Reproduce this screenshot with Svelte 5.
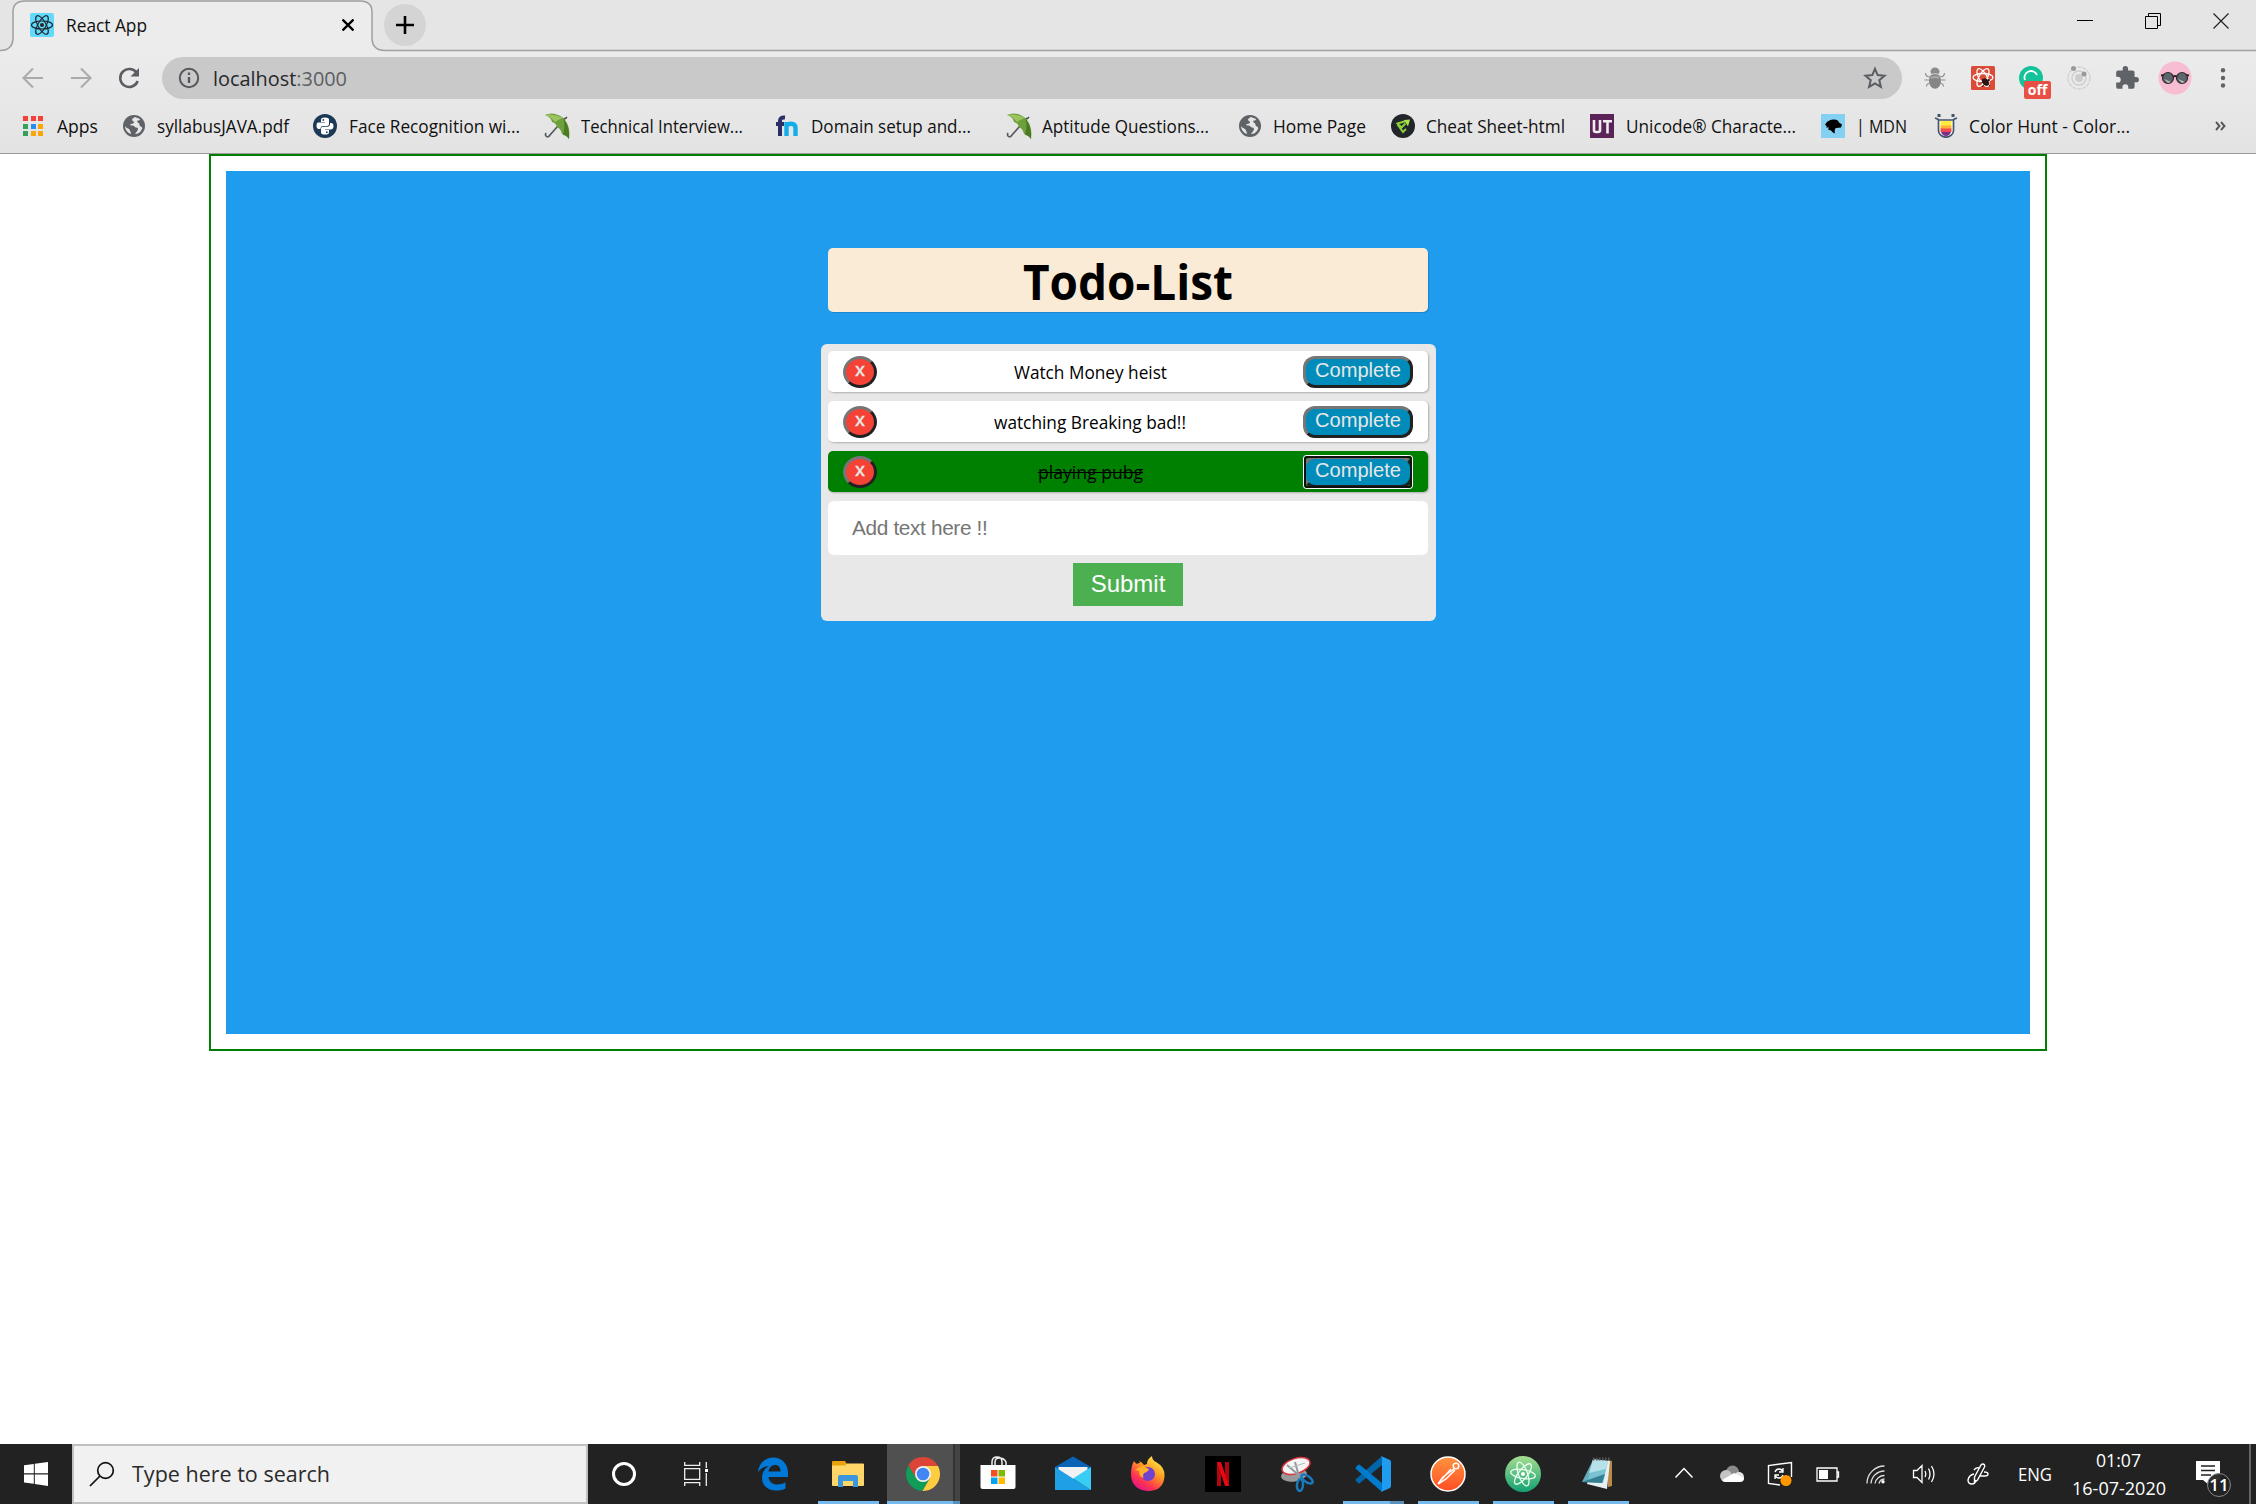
<script>
  const bookmarks = [
    { icon: 'apps', label: 'Apps', slot: 36, text: 41, cell: 101 },
    { icon: 'globe', label: 'syllabusJAVA.pdf', slot: 35, text: 132, cell: 191 },
    { icon: 'python', label: 'Face Recognition wi...', slot: 36, text: 171, cell: 231 },
    { icon: 'umbrella', label: 'Technical Interview...', slot: 37, text: 162, cell: 231 },
    { icon: 'fn', label: 'Domain setup and...', slot: 36, text: 160, cell: 231 },
    { icon: 'umbrella', label: 'Aptitude Questions...', slot: 36, text: 167, cell: 232 },
    { icon: 'globe', label: 'Home Page', slot: 35, text: 93, cell: 153 },
    { icon: 'emerald', label: 'Cheat Sheet-html', slot: 35, text: 139, cell: 199 },
    { icon: 'ut', label: 'Unicode® Characte...', slot: 36, text: 170, cell: 231 },
    { icon: 'mdn', label: '| MDN', slot: 35, text: 51, cell: 113 },
    { icon: 'colorhunt', label: 'Color Hunt - Color...', slot: 35, text: 161, cell: 281 }
  ];

  const extensions = ['bug', 'reactdev', 'grammarly', 'orbit', 'puzzle', 'avatar', 'dots'];

  let todos = $state([
    { text: 'Watch Money heist', width: 153, done: false },
    { text: 'watching Breaking bad!!', width: 192, done: false },
    { text: 'playing pubg', width: 105, done: true }
  ]);

  const pinned = [
    { icon: 'edge' },
    { icon: 'folder', state: 'open wide' },
    { icon: 'chrome', state: 'active' },
    { icon: 'store' },
    { icon: 'mail' },
    { icon: 'firefox' },
    { icon: 'netflix' },
    { icon: 'snip' },
    { icon: 'vscode', state: 'open multi' },
    { icon: 'postman', state: 'open' },
    { icon: 'atom', state: 'open' },
    { icon: 'notepad', state: 'open' }
  ];

  const tray = ['chevron', 'cloud', 'update', 'battery', 'wifi', 'volume'];

  // Condenses a label horizontally so that it fills the given width.
  function fit(node, width) {
    const natural = node.getBoundingClientRect().width;
    node.style.transform = `scaleX(${width / natural})`;
    node.style.marginRight = `${width - natural}px`;
  }
</script>

{#snippet icon(name)}
  {#if name === 'apps'}
    <svg width="24" height="24" viewBox="0 0 24 24">
      <path fill="#f44336" d="M2 2h5v5H2zM10 2h5v5h-5zM17 2h5v5h-5z" />
      <path fill="#34a05a" d="M2 10h5v5H2zM2 17h5v5H2z" />
      <path fill="#2a8cf0" d="M10 10h5v5h-5z" />
      <path fill="#f9a60a" d="M17 10h5v5h-5zM10 17h5v5h-5zM17 17h5v5h-5z" />
    </svg>
  {:else if name === 'globe'}
    <svg width="24" height="24" viewBox="0 0 24 24">
      <circle cx="12" cy="12" r="11" fill="#5f6368" />
      <path fill="#e6e6e6" d="M13 3c-1 1-3 1-3 3 0 1 2 1 2 2s-1 2-3 2l-1 1c1 1 4 0 5 2 1 1 3 0 3 2s-2 3-3 5c3 0 6-2 7-5 1-2-1-2-2-3s0-3-2-3l-1-2c1-1 3 0 3-2zM3 12c1 2 3 2 4 3 1 2 2 3 2 5-3-1-6-4-6-8z" />
    </svg>
  {:else if name === 'python'}
    <svg width="24" height="24" viewBox="0 0 24 24">
      <circle cx="12" cy="12" r="12" fill="#1c3a56" />
      <path fill="#fff" d="M8 8V5.500Q8 3.500 12 3.500t4 2V10q0 2-2 2h-4q-2.500 0-2.500 3H6q-2.500 0-2.500-3.500T6 8.500h6V8z" />
      <path fill="#fff" d="M16 16v2.500q0 2-4 2t-4-2V15q0-2.200 2-2.200h4.500q2.500 0 2.500-3V9h1q2.500 0 2.500 3T18 15.500h-6v.5z" />
      <circle cx="10.300" cy="5.900" r=".9" fill="#1c3a56" /><circle cx="13.800" cy="18.200" r=".9" fill="#1c3a56" />
    </svg>
  {:else if name === 'umbrella'}
    <svg width="26" height="26" viewBox="0 0 26 26">
      <path d="M21 5 6 22Q4 25 2 23Q1 22 2 20" fill="none" stroke="#555b60" stroke-width="1.700" />
      <path fill="#6e9f3d" d="M1 2Q9-2 18 4q9 7 7 22-3-5-7-5-1-5-5-7-1-4-5-5Q7 4 1 2z" />
      <path fill="#9bc45f" d="M1 2q9-2 18 3-4 1-8 4Q7 4 1 2z" /><path fill="#4a7a22" d="M19 5q7 8 6 21-3-4-6-4Q22 12 19 5z" />
      <path d="M21 6l2-2" stroke="#444" stroke-width="1.500" />
    </svg>
  {:else if name === 'fn'}
    <svg width="24" height="24" viewBox="0 0 24 24">
      <path fill="none" stroke="#2a2f66" stroke-width="4" d="M5 22V7q0-4 5-3.500M1 10h8" />
      <path fill="none" stroke="#12aeea" stroke-width="4.400" d="M11.500 22V8M11.500 12q2-3 6-2 3 .5 3 4v8" />
    </svg>
  {:else if name === 'emerald'}
    <svg width="24" height="24" viewBox="0 0 24 24">
      <circle cx="12" cy="12" r="12" fill="#22252a" />
      <path fill="none" stroke="#8ccf3a" stroke-width="2" d="M15 7 6.500 9.500l4 4 4-4M6.500 10.500 12 18l3-3" /><path fill="#a9e34a" d="m13 6 6-.500-2 7z" />
    </svg>
  {:else if name === 'ut'}
    <svg width="24" height="24" viewBox="0 0 24 24">
      <path fill="#5c2358" d="M0 0h24v24H0z" />
      <path fill="none" stroke="#eee" stroke-width="2.600" d="M4 6v10.500Q4 18 6 18h2q2 0 2-1.500V6M13 7.300h9M17.500 7v12.500" />
    </svg>
  {:else if name === 'mdn'}
    <svg width="24" height="24" viewBox="0 0 24 24">
      <path fill="#83d0f2" d="M0 0h24v24H0z" />
      <path d="M4 11q2-5 8-5.500 5-.5 6 3l3 2-1 3-5 .5q-2 1-1 5.500-3-1-4-3l-3-1 1-2-3 0 1-1.500z" />
    </svg>
  {:else if name === 'colorhunt'}
    <svg width="24" height="24" viewBox="0 0 24 24">
      <path fill="#fff" d="M4 6h16v10a8 7 0 0 1-16 0z" />
      <path fill="#ffeb3b" d="M6.500 7h11v5h-11z" /><path fill="#ffb038" d="M6.500 11.500h11V15h-11z" /><path fill="#ee4b50" d="M6.500 14.500h11V18h-11z" /><path fill="#7b2f8c" d="M7 18h10q-1.500 4-5 4t-5-4z" />
      <path fill="none" stroke="#42556b" stroke-width="1.700" d="M1 4q3 1 4 2h14q1-1 4-2M4.500 6v10.500a7.500 6.700 0 0 0 15 0V6" />
      <path stroke="#42556b" stroke-width="3" d="M5 0v3M19 0v3" />
    </svg>
  {:else if name === 'bug'}
    <svg width="24" height="24" viewBox="0 0 24 24">
      <path d="M2.500 7q0 4 5 4M21.500 7q0 4-5 4M1.500 14h21M3.500 20.500q0-3 4-3.500M20.500 20.500q0-3-4-3.500" fill="none" stroke="#909090" stroke-width="1.200" />
      <ellipse cx="12" cy="5.500" rx="4.500" ry="4" fill="#8c8c8c" /><ellipse cx="12" cy="15" rx="6" ry="7.800" fill="#858585" />
      <path d="M6 9.500Q12 6 18 9.500" fill="none" stroke="#d5d5d5" />
      <path d="M8 12q4-2 8 0" fill="none" stroke="#aaa" stroke-width="2" />
    </svg>
  {:else if name === 'reactdev'}
    <svg width="24" height="24" viewBox="0 0 24 24">
      <rect width="24" height="24" rx="1.500" fill="#dc4a38" />
      <g fill="none" stroke="#fff" stroke-width="1.300"><ellipse cx="12" cy="11.500" rx="10" ry="4" /><ellipse cx="12" cy="11.500" rx="10" ry="4" transform="rotate(60 12 11.500)" /><ellipse cx="12" cy="11.500" rx="10" ry="4" transform="rotate(120 12 11.500)" /></g>
      <ellipse cx="14.500" cy="16" rx="3" ry="4" fill="#2a1414" transform="rotate(-35 14.500 16)" />
      <path d="M10 17l9-3M11 21l7-8M11 13l8 7" stroke="#2a1414" />
    </svg>
  {:else if name === 'grammarly'}
    <svg width="34" height="34" viewBox="0 0 34 34">
      <circle cx="17" cy="17" r="12" fill="#15c39a" />
      <path d="M11 19a6.500 6.500 0 0 1 12-5" fill="none" stroke="#fff" stroke-width="1.800" />
    </svg>
  {:else if name === 'orbit'}
    <svg width="26" height="26" viewBox="0 0 26 26">
      <circle cx="13" cy="13" r="11" fill="none" stroke="#d0d0d0" stroke-width="1.300" stroke-dasharray="4 1" /><circle cx="13" cy="13" r="7" fill="none" stroke="#ccc" stroke-width="1.300" /><circle cx="13" cy="13" r="4" fill="#ccc" />
      <circle cx="7.500" cy="3.500" r="2.500" fill="#999" /><circle cx="18" cy="9" r="2.500" fill="#999" />
    </svg>
  {:else if name === 'puzzle'}
    <svg width="26" height="26" viewBox="0 0 24 24">
      <path fill="#5f6368" d="M20.500 11H19V7a2 2 0 0 0-2-2h-4V3.500a2.500 2.500 0 0 0-5 0V5H4a2 2 0 0 0-2 2v3.800h1.500a2.700 2.700 0 0 1 0 5.400H2V20a2 2 0 0 0 2 2h3.800v-1.500a2.700 2.700 0 0 1 5.400 0V22H17a2 2 0 0 0 2-2v-4h1.500a2.500 2.500 0 0 0 0-5z" />
    </svg>
  {:else if name === 'avatar'}
    <svg width="34" height="34" viewBox="0 0 34 34">
      <circle cx="17" cy="17" r="16.500" fill="#f9bdd3" />
      <circle cx="10" cy="17" r="5.500" fill="#5d666a" stroke="#33282c" stroke-width="1.200" /><circle cx="24" cy="17" r="5.500" fill="#5d666a" stroke="#33282c" stroke-width="1.200" />
      <path d="M3 14.500l3-.5M31 14.500l-3-.5M15 16q2-2 4 0" fill="none" stroke="#33282c" stroke-width="1.800" />
      <path d="M6 18l4 4 3-1zM20 18l4 4 3-1z" fill="#b9c0c2" />
    </svg>
  {:else if name === 'dots'}
    <svg width="8" height="24" viewBox="0 0 8 24"><g fill="#5f6368"><circle cx="4" cy="4.300" r="2.200" /><circle cx="4" cy="12" r="2.200" /><circle cx="4" cy="19.500" r="2.200" /></g></svg>
  {:else if name === 'edge'}
    <svg width="36" height="36" viewBox="0 0 36 36">
      <path fill="#0078d7" d="M3 16C4 6 11 1.500 18.500 1.500 27 1.500 33 8 33 17v4H13.500c.5 5 4.500 7.500 9 7.500 3 0 5.500-.8 8-2.200v6.200C28 34 25 34.500 21 34.500 12 34.500 7 29 7 21.500c0-5 3-9.300 7-11.500C9.500 10.500 6 12 3 16zm10.500-.5h12c0-4-1.800-6.500-5.500-6.500s-6 3-6.500 6.500z" />
    </svg>
  {:else if name === 'folder'}
    <svg width="36" height="36" viewBox="0 0 36 36">
      <path fill="#e8a30c" d="M2 6q0-1 1-1h12l2 3v6H2z" /><path fill="#ffd667" d="M2 9.500h13l2-2h16q1 0 1 1V29q0 1-1 1H3q-1 0-1-1z" />
      <path fill="#3b97dc" d="M8 31V21q0-2 2-2h16q2 0 2 2v10h-5v-6H13v6z" />
    </svg>
  {:else if name === 'chrome'}
    <svg width="36" height="36" viewBox="0 0 36 36">
      <path fill="#db4437" d="M3.300 9.500 10.600 22 18 10h14.900A17 17 0 0 0 3.300 9.500z" />
      <path fill="#0f9d58" d="M3.300 9.500A17 17 0 0 0 17.500 35l7.300-13H11z" /><path fill="#ffcd40" d="M33 10H18l7 12-7.500 13A17 17 0 0 0 33 10z" />
      <circle cx="18" cy="18" r="8" fill="#f1f1f1" /><circle cx="18" cy="18" r="6.300" fill="#4285f4" />
    </svg>
  {:else if name === 'store'}
    <svg width="36" height="36" viewBox="0 0 36 36">
      <path d="M12 10V6q0-5 5-5t5 5v4M15 10V6q0-4 4.500-4T26 6v4" fill="none" stroke="#eee" stroke-width="1.500" />
      <path fill="#fff" d="M.5 9h35v22q0 2-2 2h-31q-2 0-2-2z" />
      <path fill="#f25022" d="M11 14h6.500v6.500H11z" /><path fill="#7fba00" d="M18.500 14H25v6.500h-6.500z" /><path fill="#00a4ef" d="M11 21.500h6.500V28H11z" /><path fill="#ffb900" d="M18.500 21.500H25V28h-6.500z" />
    </svg>
  {:else if name === 'mail'}
    <svg width="36" height="36" viewBox="0 0 36 36">
      <path fill="#0b63b5" d="M0 11 18 .5 36 11v5H0z" /><path fill="#f2f2f2" d="M3.500 11h29v12h-29z" /><path fill="#1f9fe5" d="M0 11 36 34H0z" /><path fill="#38cdf5" d="M36 11v23L18 22.500z" />
    </svg>
  {:else if name === 'firefox'}
    <svg width="36" height="36" viewBox="0 0 36 36">
      <defs>
        <linearGradient id="fox" x1=".9" y1=".1" x2=".3" y2="1"><stop offset="0" stop-color="#fff04a" /><stop offset=".4" stop-color="#ff9a22" /><stop offset=".75" stop-color="#ff3550" /><stop offset="1" stop-color="#e31587" /></linearGradient>
      </defs>
      <path fill="url(#fox)" d="M4 5q1 2 3 3 1-1 3-1l-1-2q3 1 5 4l3-1q0-5 5-8 0 4 4 6 9 5 8.500 14Q33.500 35 18 35 2 34 1 19 1 10 4 5z" />
      <circle cx="18" cy="18" r="7" fill="#7142cf" /><path fill="#ffae28" d="M5 14q5-4 9-4 1 2 5 3-1 3-5 4-2 3 0 5-5-1-5-7z" />
    </svg>
  {:else if name === 'netflix'}
    <svg width="36" height="36" viewBox="0 0 36 36">
      <path d="M0 0h36v36H0z" /><path fill="#b1060f" d="M12 6h4v24h-4zM20 6h4v24h-4z" /><path fill="#e50914" d="M12 6h4l8 24h-4z" />
    </svg>
  {:else if name === 'snip'}
    <svg width="36" height="36" viewBox="0 0 36 36">
      <ellipse cx="14" cy="19" rx="13" ry="6.500" fill="#999" transform="rotate(-8 14 19)" />
      <ellipse cx="16" cy="10" rx="14.500" ry="7.500" fill="#f5f5f5" stroke="#d63239" stroke-width="1.500" transform="rotate(-18 16 10)" />
      <path d="M7 9 22 22M15 6l5 18" stroke="#949a9f" stroke-width="2" />
      <path d="M9 12l16-5" stroke="#b5b9bc" />
      <g fill="none" stroke="#1979bd" stroke-width="2.500"><ellipse cx="20" cy="29" rx="3" ry="6" transform="rotate(5 20 29)" /><ellipse cx="27" cy="23" rx="3" ry="6.500" transform="rotate(-55 27 23)" /></g>
    </svg>
  {:else if name === 'vscode'}
    <svg width="36" height="36" viewBox="0 0 36 36">
      <path fill="#0065a9" d="M27 9 5 27q-1 1-2 0l-2-2q-1-1 0-2L27 0z" /><path fill="#007acc" d="M27 27 5 9Q4 8 3 9l-2 2q-1 1 0 2l26 23z" /><path fill="#1f9cf0" d="M26 0 35 4q1 .5 1 2v24q0 1-1 2l-9 4q1-1 1-3V3q0-2-1-3z" />
    </svg>
  {:else if name === 'postman'}
    <svg width="36" height="36" viewBox="0 0 36 36">
      <defs><linearGradient id="pm" x2="0" y2="1"><stop stop-color="#ff9340" /><stop offset="1" stop-color="#ff4e24" /></linearGradient></defs>
      <circle cx="18" cy="18" r="17" fill="url(#pm)" stroke="#fff" stroke-width="1.500" />
      <circle cx="26" cy="10" r="2.800" fill="none" stroke="#fff" stroke-width="1.500" /><path d="M24 13 13 21l-5 7M25 14l-9 9-8 5M21 13l-9 10" fill="none" stroke="#fff" stroke-width="1.500" />
    </svg>
  {:else if name === 'atom'}
    <svg width="36" height="36" viewBox="0 0 36 36">
      <defs><linearGradient id="at" x2="0" y2="1"><stop stop-color="#a7dd91" /><stop offset="1" stop-color="#12a171" /></linearGradient></defs>
      <circle cx="18" cy="18" r="18" fill="url(#at)" />
      <g fill="none" stroke="#e9fff0" stroke-width="1.300"><ellipse cx="18" cy="18" rx="12.500" ry="4.500" transform="rotate(10 18 18)" /><ellipse cx="18" cy="18" rx="12.500" ry="4.500" transform="rotate(70 18 18)" /><ellipse cx="18" cy="18" rx="12.500" ry="4.500" transform="rotate(128 18 18)" /></g><circle cx="18" cy="18" r="2" fill="#fff" />
    </svg>
  {:else if name === 'notepad'}
    <svg width="36" height="36" viewBox="0 0 36 36">
      <path fill="#b88a45" d="M28 4l4 1v25l-4 1z" /><path fill="#e8eff2" d="M13 3l17 2-3 28-20-5z" />
      <path fill="#6cbccf" d="M13 4l15 1-5 22L2 26z" opacity=".9" /><path fill="#347f91" d="M2 26l20 1 3-9z" /><path fill="#b8e0e9" d="M13 4l15 1-2 8L9 17z" />
      <path d="M13 3h17" stroke="#555" stroke-width="3" stroke-dasharray="1.500 1.500" />
    </svg>
  {:else if name === 'chevron'}
    <svg width="26" height="26" viewBox="0 0 26 26"><path d="m4.500 16.500 8.500-9 8.500 9" fill="none" stroke="#fff" stroke-width="1.500" /></svg>
  {:else if name === 'cloud'}
    <svg width="26" height="26" viewBox="0 0 26 26">
      <circle cx="13.500" cy="11" r="6.500" fill="#8b8b8b" /><circle cx="7" cy="15" r="6" fill="#c4c4c4" /><circle cx="20" cy="16" r="5" fill="#e5e5e5" /><path fill="#fff" d="M3 19 15 12l10 5q0 4-4 4H6q-2 0-3-2z" />
    </svg>
  {:else if name === 'update'}
    <svg width="28" height="28" viewBox="0 0 28 28">
      <path d="M14 25 2.500 23.500V5.500L25.500 2.500V17" fill="none" stroke="#fff" stroke-width="1.400" />
      <path d="M9 12q1-3 4-3 3 0 4 3M17 8v4h-4M17 15q-1 3-4 3-3 0-4-3M9 19v-4h4" fill="none" stroke="#fff" stroke-width="1.300" /><circle cx="20" cy="20.500" r="5.500" fill="#ff9800" />
    </svg>
  {:else if name === 'battery'}
    <svg width="26" height="26" viewBox="0 0 26 26"><path d="M2 7h20v13H2zM22 11h1.500v5H22" fill="none" stroke="#fff" stroke-width="1.300" /><path fill="#fff" d="M4 9h9v9H4z" /></svg>
  {:else if name === 'wifi'}
    <svg width="26" height="26" viewBox="0 0 26 26"><path d="M4 22.500A17.500 17.500 0 0 1 21.500 5M8 22.500A13.500 13.500 0 0 1 21.500 10M12 22.500A9.500 9.500 0 0 1 21.500 14.500M16 22.500a6 6 0 0 1 5.500-4.500" fill="none" stroke="#ddd" stroke-width="1.300" /><circle cx="20" cy="20.800" r="1.700" fill="#fff" /></svg>
  {:else if name === 'volume'}
    <svg width="26" height="26" viewBox="0 0 26 26"><path d="M2.500 9.500h3.500L11 4.500v17L6 16.500H2.500zM14 10q1.500 3 0 6M17.500 7.500q3 5.500 0 11M20.500 5q5 8 0 16" fill="none" stroke="#fff" stroke-width="1.300" /></svg>
  {:else if name === 'pen'}
    <svg width="26" height="26" viewBox="0 0 26 26"><path d="m9.500 16 6.500-12q2-2 3.500 0 .5 1 0 2L12.500 19l-3 2.500zM9 13q-5 1-6 6 0 4 4 4 3 0 4-4M14 15h6q3 0 3-2t-4-2M9 9q2-3 5-2" fill="none" stroke="#fff" stroke-width="1.400" /></svg>
  {/if}
{/snippet}

<div class="screen">
  <header class="browser">
    <div class="tabstrip">
      <svg class="outline" width="2256" height="52" viewBox="0 0 2256 52">
        <path d="M0 50.500q13 0 13-13V12Q13 1 25 1h335q12 0 12 11v25.500q0 13 13 13h1871V53H0z" fill="#ececec" />
        <path d="M0 50.500q13 0 13-13V12Q13 1 25 1h335q12 0 12 11v25.500q0 13 13 13h1871" fill="none" stroke="#9f9f9f" stroke-width="1.500" />
      </svg>
      <div class="tab">
        <svg width="24" height="24" viewBox="0 0 24 24">
          <rect width="24" height="24" rx="2" fill="#61dafb" />
          <g fill="none" stroke="#20232a" stroke-width="1.200"><ellipse cx="12" cy="12" rx="10.500" ry="4" /><ellipse cx="12" cy="12" rx="10.500" ry="4" transform="rotate(60 12 12)" /><ellipse cx="12" cy="12" rx="10.500" ry="4" transform="rotate(120 12 12)" /></g><circle cx="12" cy="12" r="2" fill="#20232a" />
        </svg>
        <span class="tab-title"><span class="fit" use:fit={81}>React App</span></span>
        <svg class="tab-close" width="12" height="12" viewBox="0 0 12 12"><path d="m.5.5 11 11M11.500.5l-11 11" stroke="#000" stroke-width="2.300" /></svg>
      </div>
      <div class="new-tab">
        <svg width="18" height="18" viewBox="0 0 18 18"><path d="M9 0v18M0 9h18" stroke="#000" stroke-width="2.600" /></svg>
      </div>
      <div class="controls">
        <svg width="16" height="16" viewBox="0 0 16 16"><path d="M0 7.500h16" stroke="#000" stroke-width="1" /></svg>
        <svg width="16" height="16" viewBox="0 0 16 16"><path d="M.5 3.500h12v12H.5zM3.500 3.500v-3h12v12h-3" fill="none" stroke="#000" stroke-width="1" /></svg>
        <svg width="16" height="16" viewBox="0 0 16 16"><path d="m.5.5 15 15M15.500.5l-15 15" stroke="#222" stroke-width="1.200" /></svg>
      </div>
    </div>

    <div class="toolbar">
      <svg class="nav" width="24" height="24" viewBox="0 0 24 24"><path d="M22 12H3M12 2.500 2.500 12l9.500 9.500" fill="none" stroke="#a9abad" stroke-width="2.100" /></svg>
      <svg class="nav" width="24" height="24" viewBox="0 0 24 24"><path d="M2 12h19M12 2.500l9.500 9.500-9.500 9.500" fill="none" stroke="#a9abad" stroke-width="2.100" /></svg>
      <svg class="nav" width="24" height="24" viewBox="0 0 24 24"><path d="M20 7.500A9 9 0 1 0 20.700 15" fill="none" stroke="#5a5d61" stroke-width="2.500" /><path d="M22 2v8.500h-8.500z" fill="#5a5d61" /></svg>
      <div class="omnibox">
        <svg width="22" height="22" viewBox="0 0 22 22"><circle cx="11" cy="11" r="9.200" fill="none" stroke="#55585c" stroke-width="2" /><path d="M11 10v6M11 5.500v2.500" stroke="#55585c" stroke-width="2.400" /></svg>
        <span class="url"><span class="fit" use:fit={134}>localhost<i>:3000</i></span></span>
        <svg class="star" width="24" height="24" viewBox="0 0 24 24"><path d="m12 2.800 2.700 6.300 6.800.6-5.200 4.500 1.600 6.700-5.900-3.500-5.900 3.500 1.600-6.700L2.500 9.700l6.800-.6z" fill="none" stroke="#5a5d61" stroke-width="2" /></svg>
      </div>
      <div class="extensions">
        {#each extensions as name}
          <span class="ext">
            {@render icon(name)}
            {#if name === 'grammarly'}<b class="off">off</b>{/if}
          </span>
        {/each}
      </div>
    </div>

    <nav class="bookmarks">
      {#each bookmarks as b}
        <span class="bookmark" style:width="{b.cell}px">
          <span class="slot" style:width="{b.slot}px">{@render icon(b.icon)}</span>
          <span class="fit" use:fit={b.text}>{b.label}</span>
        </span>
      {/each}
      <svg width="12" height="12" viewBox="0 0 12 12"><path d="m1 2 3.500 4L1 10M6 2l3.500 4L6 10" fill="none" stroke="#55585c" stroke-width="1.900" /></svg>
    </nav>
  </header>

  <main class="page">
    <div class="frame">
      <section class="board">
        <h1><span class="fit" use:fit={210}>Todo-List</span></h1>
        <div class="panel">
          {#each todos as todo}
            <div class="todo" class:done={todo.done}>
              <button class="remove">x</button>
              <span class="label"><span class="fit" use:fit={todo.width}>{todo.text}</span></span>
              <button class="complete" onclick={() => (todo.done = !todo.done)}><span class="fit" use:fit={86}>Complete</span></button>
            </div>
          {/each}
          <input placeholder="Add text here !!" />
          <button class="submit">Submit</button>
        </div>
      </section>
    </div>
  </main>

  <footer class="taskbar">
    <div class="start">
      <svg width="24" height="24" viewBox="0 0 24 24"><path fill="#fff" d="M0 3.300 9.800 1.900v9.400H0zM10.800 1.700 24 0v11.300H10.800zM0 12.400h9.800v9.400L0 20.600zM10.800 12.400H24V24l-13.200-1.900z" /></svg>
    </div>
    <div class="search">
      <svg width="26" height="26" viewBox="0 0 26 26"><circle cx="16.500" cy="9.500" r="7.800" fill="none" stroke="#111" stroke-width="1.700" /><path d="M11 15 1 25" stroke="#111" stroke-width="1.700" /></svg>
      <span class="fit" use:fit={198}>Type here to search</span>
    </div>
    <div class="tile narrow"><svg width="26" height="26" viewBox="0 0 26 26"><circle cx="13" cy="13" r="10.500" fill="none" stroke="#fff" stroke-width="3" /></svg></div>
    <div class="tile narrow view"><svg width="24" height="24" viewBox="0 0 24 24"><path d="M.7 0v3.300h15V0M.7 6.700h15v10.600h-15zM.7 24v-3.300h15V24M22.300 0v6M22.300 11v13" fill="none" stroke="#eee" stroke-width="1.300" /><path fill="#fff" d="M21 7h3v3h-3z" /></svg></div>
    {#each pinned as app}
      <div class="tile {app.state ?? ''}">{@render icon(app.icon)}</div>
    {/each}
    <div class="tray">
      {#each tray as name}
        <span class="tray-icon">{@render icon(name)}</span>
      {/each}
      <span class="tray-icon ink">{@render icon('pen')}</span>
      <span class="lang"><span class="fit" use:fit={34}>ENG</span></span>
      <div class="clock">
        <div><span class="fit" use:fit={45}>01:07</span></div>
        <div><span class="fit" use:fit={94}>16-07-2020</span></div>
      </div>
      <div class="notice">
        <svg width="26" height="26" viewBox="0 0 26 26"><path fill="#fff" d="M0 0h24v19H13v5l-6-5H0z" /><path d="M5 5h14M5 9.500h14M5 14h10" stroke="#222" stroke-width="1.300" /></svg>
        <b>11</b>
      </div>
    </div>
  </footer>
</div>

<style>
  :global(body) {
    background: #fff;
  }
  .screen {
    display: flex;
    flex-direction: column;
    width: 2256px;
    height: 1504px;
    overflow: hidden;
    font-family: 'Open Sans', 'Noto Sans', sans-serif;
    font-size: 17.5px;
    font-weight: 370;
    line-height: 24px;
    color: #111;
  }
  svg {
    display: block;
    flex: none;
  }
  .fit {
    display: inline-block;
    flex: none;
    white-space: nowrap;
    transform-origin: left center;
  }

  .browser {
    flex: none;
    height: 153px;
    border-bottom: 1px solid #9b9b9b;
    background: linear-gradient(#e5e5e5 0 51px, #ececec 51px, #e3e3e3);
    box-sizing: content-box;
  }
  .tabstrip {
    position: relative;
    display: flex;
    height: 51px;
  }
  .outline {
    position: absolute;
    top: 0;
    left: 0;
  }
  .tab {
    position: relative;
    display: flex;
    align-items: center;
    box-sizing: content-box;
    width: 324px;
    height: 49px;
    padding-left: 30px;
  }
  .tab-title {
    padding-left: 12px;
  }
  .tab-close {
    margin-left: auto;
  }
  .new-tab {
    position: relative;
    display: grid;
    place-items: center;
    width: 42px;
    height: 42px;
    margin: 4px 0 0 30px;
    border-radius: 50%;
    background: #d4d4d4;
  }
  .controls {
    position: relative;
    display: flex;
    gap: 52px;
    margin: 13px 27px 0 auto;
  }
  .toolbar {
    display: flex;
    align-items: center;
    height: 54px;
    padding-left: 21px;
  }
  .nav {
    margin-right: 24px;
  }
  .nav:nth-child(3) {
    margin: 0 21px 0 0;
  }
  .omnibox {
    display: flex;
    align-items: center;
    box-sizing: border-box;
    width: 1740px;
    height: 42px;
    padding: 0 15px 0 16px;
    border-radius: 21px;
    background: #c9c9c9;
  }
  .url {
    padding-left: 13px;
    font-size: 20.5px;
    color: #26282b;
  }
  .url i {
    font-style: normal;
    color: #5c5f63;
  }
  .star {
    margin-left: auto;
  }
  .extensions {
    display: flex;
    margin-left: 9px;
  }
  .ext {
    position: relative;
    display: grid;
    place-items: center;
    width: 48px;
    height: 40px;
  }
  .off {
    position: absolute;
    left: 17px;
    top: 23px;
    width: 27px;
    height: 18px;
    border-radius: 2px;
    background: #e85045;
    color: #fff;
    font-size: 14px;
    line-height: 18px;
    text-align: center;
  }
  .bookmarks {
    display: flex;
    align-items: center;
    height: 41px;
    padding-left: 21px;
  }
  .bookmark {
    display: flex;
    align-items: center;
    flex: none;
  }
  .bookmark .slot {
    flex: none;
  }

  .page {
    flex: 1;
    background: #fff;
  }
  .frame {
    box-sizing: border-box;
    width: 1838px;
    height: 897px;
    margin-left: 209px;
    padding: 15px;
    border: 2px solid #008000;
  }
  .board {
    display: flex;
    flex-direction: column;
    align-items: center;
    box-sizing: border-box;
    height: 863px;
    padding-top: 77px;
    background: #209cee;
  }
  h1 {
    box-sizing: border-box;
    width: 600px;
    height: 64px;
    margin: 0 0 32px;
    padding-top: 2px;
    border-radius: 5px;
    background: #faebd7;
    box-shadow: 1px 1px 1px rgba(0, 0, 0, 0.15);
    color: #000;
    font-size: 47.5px;
    line-height: 64px;
    text-align: center;
  }
  .panel {
    display: flex;
    flex-direction: column;
    align-items: center;
    box-sizing: border-box;
    width: 615px;
    height: 277px;
    padding-top: 7px;
    border-radius: 6px;
    background: #e8e8e8;
  }
  .todo {
    display: flex;
    align-items: center;
    justify-content: space-between;
    box-sizing: border-box;
    width: 600px;
    height: 41px;
    margin-bottom: 9px;
    padding: 0 15px;
    border-radius: 5px;
    background: #fff;
    box-shadow: 1px 1px 2px rgba(0, 0, 0, 0.25);
  }
  .label {
    padding-top: 1px;
    color: #000;
  }
  .done {
    background: #008000;
  }
  .done .label .fit {
    text-decoration: line-through;
  }
  button {
    box-sizing: border-box;
    font-family: 'Liberation Sans', sans-serif;
    font-size: 20px;
    line-height: 22px;
    color: #e7e7e7;
  }
  .todo button {
    height: 32px;
    padding: 0 0 3px;
    border: 3px solid;
    border-color: #767676 #212121 #212121 #767676;
  }
  .remove {
    width: 34px;
    border-radius: 50%;
    background: #f44336;
    font-size: 19px;
    -webkit-text-stroke: 0.5px #e7e7e7;
  }
  .complete {
    position: relative;
    width: 110px;
    border-radius: 12px;
    background: #008cba;
    font-size: 20.8px;
  }
  .done .complete::after {
    content: '';
    position: absolute;
    inset: -3px -2px;
    border: 2px solid #101010;
    border-radius: 3px;
    box-shadow: 0 0 0 1px #fff;
  }
  input {
    box-sizing: border-box;
    width: 600px;
    height: 54px;
    margin-bottom: 8px;
    padding: 0 24px;
    border: 0;
    border-radius: 6px;
    background: #fff;
    font: 20.8px 'Liberation Sans', sans-serif;
    letter-spacing: -0.35px;
  }
  input::placeholder {
    color: #757575;
  }
  .submit {
    width: 110px;
    height: 43px;
    padding: 0 0 2px;
    border: 0;
    background: #4caf50;
    color: #fff;
    font-size: 24px;
  }

  .taskbar {
    display: flex;
    flex: none;
    height: 60px;
    background: #222;
  }
  .start {
    display: grid;
    place-items: center;
    width: 72px;
  }
  .search {
    display: flex;
    align-items: center;
    gap: 17px;
    box-sizing: border-box;
    width: 516px;
    padding-left: 15px;
    border: 2px solid #c0c0c0;
    background: #f1f1f1;
    font-size: 22.5px;
    color: #2b2b2b;
  }
  .tile {
    position: relative;
    display: grid;
    place-items: center;
    flex: none;
    width: 75px;
    height: 60px;
  }
  .narrow {
    width: 72px;
  }
  .view {
    margin-right: 3px;
  }
  .open::after {
    content: '';
    position: absolute;
    left: 8px;
    right: 6px;
    bottom: 0;
    height: 3px;
    background: #76b9ed;
  }
  .multi::after {
    background: linear-gradient(90deg, #76b9ed 47px, #5a8fb9 47px);
  }
  .active::before {
    content: '';
    position: absolute;
    left: 2px;
    bottom: 0;
    width: 73px;
    height: 60px;
    background:
      linear-gradient(90deg, #76b9ed 66px, #5a8fb9 66px) bottom / 100% 3px no-repeat,
      linear-gradient(90deg, #505050 66px, #333 66px 68px, #444 68px);
  }
  .active :global(svg) {
    position: relative;
  }
  .tray {
    display: flex;
    align-items: center;
    box-sizing: border-box;
    height: 60px;
    margin-left: auto;
    padding-right: 5px;
    border-right: 2px solid #666;
    margin-right: 5px;
    color: #fff;
    font-size: 17.5px;
  }
  .tray-icon {
    display: grid;
    place-items: center;
    width: 48px;
  }
  .ink {
    width: 60px;
  }
  .lang {
    width: 54px;
    text-align: center;
  }
  .clock {
    box-sizing: border-box;
    width: 118px;
    padding: 0 5px 1px 0;
    text-align: center;
    line-height: 28px;
  }
  .notice {
    position: relative;
    width: 64px;
    box-sizing: border-box;
    padding-left: 16px;
  }
  .notice b {
    position: absolute;
    left: 27px;
    top: 12px;
    width: 22px;
    height: 22px;
    border: 1px solid #888;
    border-radius: 50%;
    background: rgba(34, 34, 34, 0.94);
    font-size: 17px;
    font-weight: 600;
    line-height: 22px;
    text-align: center;
  }
</style>
